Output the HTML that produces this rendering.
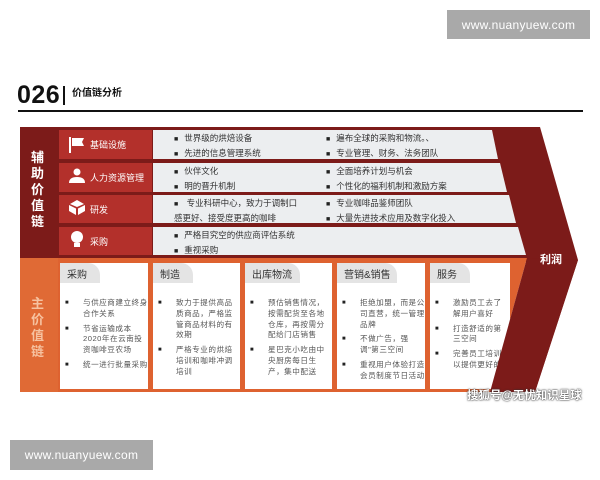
<!DOCTYPE html>
<html><head><meta charset="utf-8"><style>
*{margin:0;padding:0;box-sizing:border-box}
body{width:600px;height:480px;background:#fff;position:relative;overflow:hidden;font-family:"Liberation Sans","Noto Sans CJK SC",sans-serif}
.a{position:absolute;white-space:nowrap}
.wm{position:absolute;background:#a9a9a9;color:#fff;font-size:12px;display:flex;align-items:center;justify-content:center;letter-spacing:0.3px}
.lb{position:absolute;color:#fff;font-size:9px;left:90px}
.ct{position:absolute;color:#333;font-size:8.5px;line-height:12.5px}
.ct span{font-size:7px;margin-right:6px;color:#222}
.card{position:absolute;top:263px;height:126px;background:#fff}
.tab{position:absolute;left:0;top:0;height:20px;background:#e4e4e4;border-radius:0 12px 0 0;font-size:10px;color:#333;padding:3px 0 0 7px}
.cb{position:absolute;left:5px;top:35px;font-size:7.6px;color:#555;line-height:10.8px}
.cb div{position:relative;padding-left:18px;margin-bottom:4px;letter-spacing:0.5px}
.cb div:before{content:"■";position:absolute;left:0;top:0;color:#222;font-size:6px}
</style></head><body>
<div class="wm" style="left:447px;top:10px;width:143px;height:29px">www.nuanyuew.com</div>
<div class="wm" style="left:10px;top:440px;width:143px;height:30px">www.nuanyuew.com</div>

<div class="a" style="left:17px;top:81px;font-size:25px;font-weight:bold;color:#111;letter-spacing:0.5px">026</div>
<div class="a" style="left:63px;top:86px;width:2px;height:19px;background:#111"></div>
<div class="a" style="left:72px;top:84px;font-size:10px;font-weight:bold;color:#111">价值链分析</div>
<div class="a" style="left:18px;top:110px;width:565px;height:2px;background:#111"></div>

<svg class="a" style="left:0;top:0" width="600" height="480">
<polygon points="20,127 540,127 578,260 535,392 490,392 527,262 20,262" fill="#7c1b19"/>
<polygon points="20,258 527,258 490,392 20,392" fill="#de6230"/>
<polygon points="20,258 58,258 58,392 20,392" fill="#e06a35"/>
<rect x="20" y="127" width="38" height="131" fill="#7c1b19"/>
<rect x="59" y="130" width="93" height="29" fill="#b3302b"/>
<rect x="59" y="163" width="93" height="29" fill="#b3302b"/>
<rect x="59" y="195" width="93" height="28" fill="#b3302b"/>
<rect x="59" y="227" width="93" height="28" fill="#b3302b"/>
<polygon points="153,130 492,130 498,159 153,159" fill="#eceef0"/>
<polygon points="153,163 500,163 507,192 153,192" fill="#eceef0"/>
<polygon points="153,195 509,195 516,223 153,223" fill="#eceef0"/>
<polygon points="153,227 518,227 526,255 153,255" fill="#eceef0"/>
<rect x="69" y="137" width="2" height="16" fill="#fff"/>
<path d="M72,138 L84,138 L82,142 L84,146 L72,146Z" fill="#fff"/>
<circle cx="77" cy="172" r="3.5" fill="#fff"/>
<path d="M69,183 Q69,177 77,177 Q85,177 85,183Z" fill="#fff"/>
<path d="M70,204 L77,200 L84,204 L77,207Z" fill="#fff"/>
<path d="M69,205 L76,208.5 L76,215 L69,211Z M85,205 L78,208.5 L78,215 L85,211Z" fill="#fff"/>
<circle cx="77" cy="237" r="6" fill="#fff"/>
<rect x="74" y="243" width="6" height="4" fill="#fff"/>
</svg>

<div class="a" style="left:31px;top:150px;width:16px;font-size:13px;line-height:16px;color:#fff;font-weight:bold;white-space:normal">辅助价值链</div>
<div class="a" style="left:31px;top:296px;width:16px;font-size:13px;line-height:16px;color:#f6c2a0;font-weight:bold;white-space:normal">主价值链</div>

<div class="lb" style="top:138px">基础设施</div>
<div class="lb" style="top:171px">人力资源管理</div>
<div class="lb" style="top:203px">研发</div>
<div class="lb" style="top:235px">采购</div>

<div class="ct a" style="left:174px;top:132px"><span>■</span>世界级的烘焙设备<br><span>■</span>先进的信息管理系统</div>
<div class="ct a" style="left:326px;top:132px"><span>■</span>遍布全球的采购和物流。、<br><span>■</span>专业管理、财务、法务团队</div>
<div class="ct a" style="left:174px;top:165px"><span>■</span>伙伴文化<br><span>■</span>明的晋升机制</div>
<div class="ct a" style="left:326px;top:165px"><span>■</span>全面培养计划与机会<br><span>■</span>个性化的福利机制和激励方案</div>
<div class="ct a" style="left:174px;top:197px"><span>■</span>&nbsp;专业科研中心，致力于调制口<br>感更好、接受度更高的咖啡</div>
<div class="ct a" style="left:326px;top:197px"><span>■</span>专业咖啡品鉴师团队<br><span>■</span>大量先进技术应用及数字化投入</div>
<div class="ct a" style="left:174px;top:229px"><span>■</span>严格目究空的供应商评估系统<br><span>■</span>重视采购</div>

<div class="card" style="left:60px;width:88px"><div class="tab" style="width:40px">采购</div>
<div class="cb"><div>与供应商建立终身合作关系</div><div>节省运输成本2020年在云南投资咖啡豆农场</div><div>统一进行批量采购</div></div></div>
<div class="card" style="left:153px;width:87px"><div class="tab" style="width:40px">制造</div>
<div class="cb"><div>致力于提供高品质商品，严格监管商品材料的有效期</div><div>严格专业的烘焙培训和咖啡冲调培训</div></div></div>
<div class="card" style="left:245px;width:87px"><div class="tab" style="width:55px">出库物流</div>
<div class="cb"><div>预估销售情况，按需配货至各地仓库，再按需分配给门店销售</div><div>星巴克小吃由中央厨房每日生产，集中配送</div></div></div>
<div class="card" style="left:337px;width:88px"><div class="tab" style="width:60px">营销&amp;销售</div>
<div class="cb"><div>拒绝加盟，而是公司直营，统一管理品牌</div><div>不做广告，强调"第三空间</div><div>重视用户体验打造会员制度节日活动</div></div></div>
<div class="card" style="left:430px;width:80px;height:126px"><div class="tab" style="width:40px">服务</div>
<div class="cb" style="width:68px"><div>激励员工去了解用户喜好</div><div>打造舒适的第三空间</div><div>完善员工培训以提供更好的</div></div></div>
<svg class="a" style="left:0;top:0" width="600" height="480"><polygon points="527,258 578,260 535,392 490,392" fill="#7c1b19"/></svg>

<div class="a" style="left:540px;top:251px;font-size:11px;font-weight:bold;color:#fff">利润</div>
<div class="a" style="left:467px;top:387px;font-size:11.5px;color:#fff;font-weight:bold;text-shadow:0 0 2px #333,0 0 1px #333">搜狐号@无忧知识星球</div>
</body></html>
